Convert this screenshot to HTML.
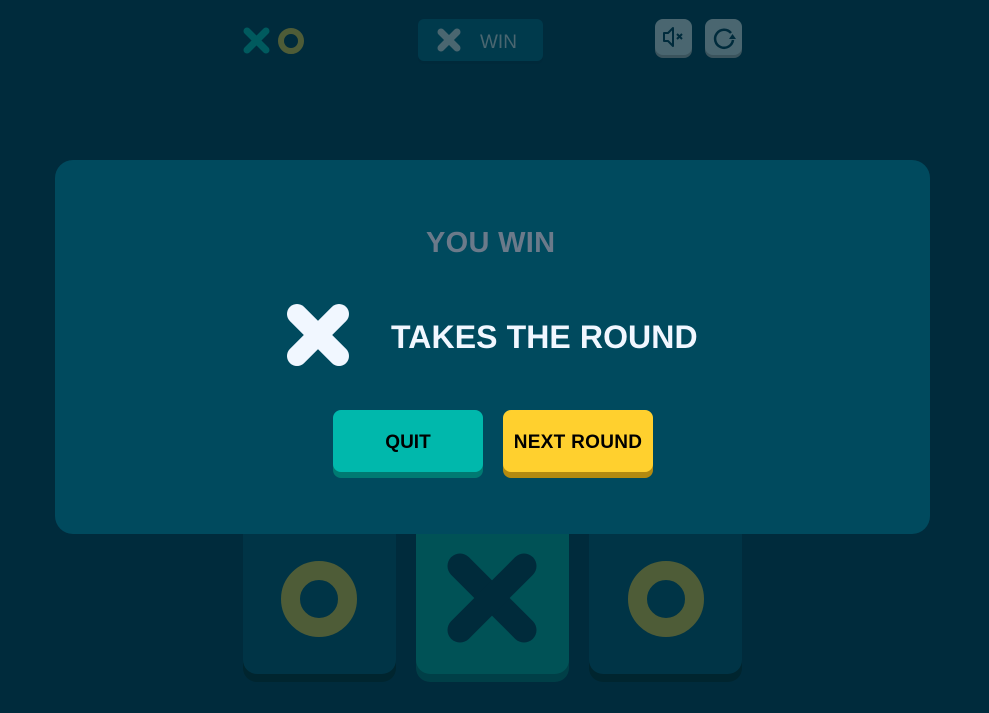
<!DOCTYPE html>
<html><head><style>
*{margin:0;padding:0;box-sizing:border-box}
body{width:989px;height:713px;background:#002b3c;position:relative;overflow:hidden;font-family:"Liberation Sans",sans-serif;font-weight:bold}
.abs{position:absolute}
.tile{position:absolute;top:500px;width:153px;height:174px;border-radius:14px;background:#003446;box-shadow:0 8px 0 #00252f}
</style></head><body>
<svg class="abs" style="left:243px;top:27px" width="64" height="28">
<g stroke="#005a5e" stroke-width="7" stroke-linecap="round"><line x1="4" y1="4" x2="23" y2="23"/><line x1="23" y1="4" x2="4" y2="23"/></g>
<circle cx="48" cy="14" r="10" fill="none" stroke="#4e5c37" stroke-width="6"/>
</svg>
<div class="abs" style="left:418px;top:19px;width:125px;height:42px;background:#003a4c;border-radius:6px;box-shadow:0 3px 0 #00293a"></div>
<svg class="abs" style="left:437px;top:28px" width="24" height="24"><g stroke="#4a6670" stroke-width="7" stroke-linecap="round"><line x1="4" y1="4" x2="20" y2="20"/><line x1="20" y1="4" x2="4" y2="20"/></g></svg>
<div class="abs" style="left:480px;top:32px;font-size:19px;font-weight:normal;color:#4a6670">WIN</div>
<div class="abs" style="left:655px;top:19px;width:37px;height:36px;background:#4a6670;border-radius:8px;box-shadow:0 3px 0 #3b545d"></div>
<div class="abs" style="left:705px;top:19px;width:37px;height:36px;background:#4a6670;border-radius:8px;box-shadow:0 3px 0 #3b545d"></div>
<svg class="abs" style="left:655px;top:19px" width="37" height="36"><g fill="none" stroke="#002b3c" stroke-width="2" stroke-linejoin="round"><path d="M9 14h4l5-5v18l-5-5H9z"/><path d="M22 15l5 5M27 15l-5 5"/></g></svg>
<svg class="abs" style="left:705px;top:19px" width="37" height="36"><g fill="none" stroke="#002b3c" stroke-width="2.5"><path d="M26 14A9 9 0 1 0 28 21"/></g><path d="M24 20l7 0l-3.5-5z" fill="#002b3c"/></svg>
<div class="tile" style="left:243px"></div>
<div class="tile" style="left:416px;background:#005256;box-shadow:0 8px 0 #003f47"></div>
<div class="tile" style="left:589px"></div>
<svg class="abs" style="left:281px;top:561px" width="76" height="76"><circle cx="38" cy="38" r="28.5" fill="none" stroke="#4e5c37" stroke-width="19"/></svg>
<svg class="abs" style="left:628px;top:561px" width="76" height="76"><circle cx="38" cy="38" r="28.5" fill="none" stroke="#4e5c37" stroke-width="19"/></svg>
<svg class="abs" style="left:446px;top:552px" width="92" height="92"><g stroke="#002b3b" stroke-width="25" stroke-linecap="round"><line x1="14" y1="14" x2="78" y2="78"/><line x1="78" y1="14" x2="14" y2="78"/></g></svg>
<div class="abs" style="left:55px;top:160px;width:875px;height:374px;background:#004a5e;border-radius:18px"></div>
<div class="abs" style="left:426px;top:227px;font-size:29px;color:#6b7a8a;white-space:nowrap;letter-spacing:0.3px">YOU WIN</div>
<svg class="abs" style="left:286px;top:303px" width="64" height="64"><g stroke="#f1f7ff" stroke-width="20" stroke-linecap="round"><line x1="11" y1="11" x2="53" y2="53"/><line x1="53" y1="11" x2="11" y2="53"/></g></svg>
<div class="abs" style="left:391px;top:319px;font-size:32px;color:#f1f7ff;white-space:nowrap;letter-spacing:0.1px">TAKES THE ROUND</div>
<div class="abs" style="left:333px;top:410px;width:150px;height:62px;background:#00b8ac;border-radius:8px;box-shadow:0 6px 0 #007a72;text-align:center;line-height:66px;font-size:19px;color:#000">QUIT</div>
<div class="abs" style="left:503px;top:410px;width:150px;height:62px;background:#ffd02e;border-radius:8px;box-shadow:0 6px 0 #b38a10;text-align:center;line-height:66px;font-size:19px;color:#000;letter-spacing:0.3px">NEXT ROUND</div>
</body></html>
